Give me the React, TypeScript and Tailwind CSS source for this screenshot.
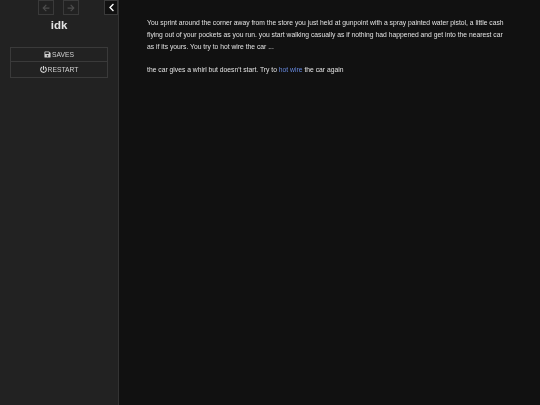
import { FaArrowLeft, FaArrowRight, FaChevronLeft, FaPowerOff, FaSave } from "react-icons/fa";

export default function App() {
  return (
    <div
      className="flex h-[405px] w-[540px] overflow-hidden bg-[#111] text-[#eee]"
      style={{ fontFamily: "'Liberation Sans', Arial, sans-serif" }}
    >
      <aside className="relative flex w-[119px] shrink-0 flex-col items-center border-r border-[#333] bg-[#222]">
        <div className="flex h-[16px] gap-[9px] pr-px">
          <button className="flex h-[15px] w-[16px] items-center justify-center border border-[#3a3a3a] text-[#4d4d4d]">
            <FaArrowLeft size={8} />
          </button>
          <button className="flex h-[15px] w-[16px] items-center justify-center border border-[#3a3a3a] text-[#4d4d4d]">
            <FaArrowRight size={8} />
          </button>
        </div>
        <button className="absolute right-0 top-0 flex h-[15px] w-[14px] items-center justify-center border border-[#3a3a3a] bg-[#111] text-white">
          <FaChevronLeft size={9} />
        </button>
        <h1 className="mt-[1px] text-[11.5px] font-bold leading-[16px] text-[#e4e4e4] blur-[0.2px]">idk</h1>
        <nav className="mt-[14px] w-[98px] border border-[#3a3a3a] text-[6.75px] leading-[14px] text-[#d0d0d0]">
          <div className="flex h-[14px] items-center justify-center gap-[1px] border-b border-[#3a3a3a] blur-[0.2px]">
            <FaSave size={7} />
            <span>SAVES</span>
          </div>
          <div className="flex h-[15px] items-center justify-center gap-[1px] blur-[0.2px]">
            <FaPowerOff size={7} />
            <span>RESTART</span>
          </div>
        </nav>
      </aside>
      <main className="pl-[28px] pr-[35px] pt-[17px] text-[6.75px] leading-[12px] text-[#e0e0e0]">
        <div className="blur-[0.2px]">
          <p>
            You sprint around the corner away from the store you just held at gunpoint with a spray painted water pistol, a little cash flying out of your pockets as you run. you start walking casually as if nothing had happened and get into the nearest car as if its yours. You try to hot wire the car ...
          </p>
          <p className="mt-[11px]">
            the car gives a whirl but doesn't start. Try to <a className="text-[#68d]">hot wire</a> the car again
          </p>
        </div>
      </main>
    </div>
  );
}
